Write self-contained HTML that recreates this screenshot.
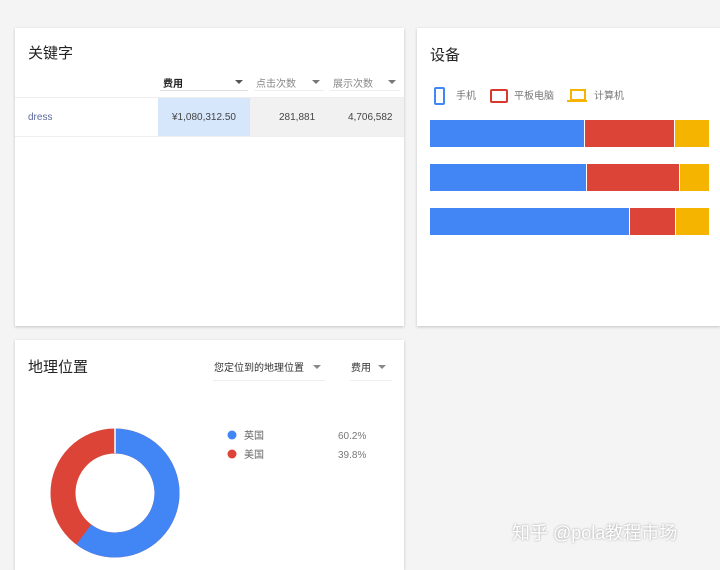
<!DOCTYPE html>
<html><head><meta charset="utf-8"><style>
body{margin:0;width:720px;height:565px;background:#f4f4f4;position:relative;overflow:hidden;font-family:"Liberation Sans","Noto Sans CJK SC",sans-serif;color:#333}
.card{position:absolute;background:#fff;box-shadow:0 1px 3px rgba(0,0,0,.2)}
.a{position:absolute;white-space:nowrap;line-height:1}
.t{font-size:15px;color:#222}
.s{font-size:10px}
.ar{position:absolute;width:0;height:0;border-left:4px solid transparent;border-right:4px solid transparent;border-top:4px solid #555}
</style></head><body>
<div class="card" style="left:15px;top:28px;width:389px;height:298px"></div>
<div class="card" style="left:417px;top:28px;width:303px;height:298px"></div>
<div class="card" style="left:15px;top:340px;width:389px;height:230px"></div>

<div class="a t" style="left:28px;top:46px">关键字</div>
<div class="a s" style="left:163px;top:80px;font-weight:bold;color:#222">费用</div><div class="ar" style="left:235px;top:80px"></div>
<div class="a" style="left:160px;top:90px;width:88px;height:1px;background:#ddd"></div>
<div class="a s" style="left:256px;top:80px;color:#888">点击次数</div><div class="ar" style="left:312px;top:80px;border-top-color:#777"></div>
<div class="a" style="left:254px;top:90px;width:70px;height:1px;background:#eee"></div>
<div class="a s" style="left:333px;top:80px;color:#888">展示次数</div><div class="ar" style="left:388px;top:80px;border-top-color:#777"></div>
<div class="a" style="left:330px;top:90px;width:70px;height:1px;background:#eee"></div>
<div class="a" style="left:15px;top:97px;width:389px;height:1px;background:#eee"></div>
<div class="a" style="left:158px;top:98px;width:92px;height:38px;background:#d6e6fb"></div>
<div class="a" style="left:250px;top:98px;width:154px;height:38px;background:#f1f1f1"></div>
<div class="a" style="left:15px;top:136px;width:389px;height:1px;background:#eee"></div>
<div class="a s" style="left:28px;top:113px;color:#5c6a9e">dress</div>
<div class="a s" style="left:172px;top:113px;color:#444">¥1,080,312.50</div>
<div class="a s" style="left:279px;top:113px;color:#444">281,881</div>
<div class="a s" style="left:348px;top:113px;color:#444">4,706,582</div>

<div class="a t" style="left:430px;top:48px">设备</div>
<div class="a" style="left:434px;top:87px;width:7px;height:14px;border:2px solid #4285f4;border-radius:2px"></div>
<div class="a s" style="left:456px;top:92px;color:#777">手机</div>
<div class="a" style="left:490px;top:89px;width:14px;height:10px;border:2px solid #d63a2f;border-radius:2px"></div>
<div class="a s" style="left:514px;top:92px;color:#777">平板电脑</div>
<div class="a" style="left:570px;top:89px;width:12px;height:8px;border:2px solid #f4b400"></div>
<div class="a" style="left:567px;top:100px;width:20px;height:2px;background:#f4b400"></div>
<div class="a s" style="left:594px;top:92px;color:#777">计算机</div>
<div class="a" style="left:430px;top:120px;width:154px;height:27px;background:#4285f4"></div>
<div class="a" style="left:585px;top:120px;width:89px;height:27px;background:#db4437"></div>
<div class="a" style="left:675px;top:120px;width:34px;height:27px;background:#f4b400"></div>
<div class="a" style="left:430px;top:164px;width:156px;height:27px;background:#4285f4"></div>
<div class="a" style="left:587px;top:164px;width:92px;height:27px;background:#db4437"></div>
<div class="a" style="left:680px;top:164px;width:29px;height:27px;background:#f4b400"></div>
<div class="a" style="left:430px;top:208px;width:199px;height:27px;background:#4285f4"></div>
<div class="a" style="left:630px;top:208px;width:45px;height:27px;background:#db4437"></div>
<div class="a" style="left:676px;top:208px;width:33px;height:27px;background:#f4b400"></div>

<div class="a t" style="left:28px;top:360px">地理位置</div>
<div class="a s" style="left:214px;top:364px;color:#333">您定位到的地理位置</div><div class="ar" style="left:313px;top:365px;border-top-color:#888"></div>
<div class="a" style="left:213px;top:380px;width:112px;height:1px;background:#eee"></div>
<div class="a s" style="left:351px;top:364px;color:#333">费用</div><div class="ar" style="left:378px;top:365px;border-top-color:#888"></div>
<div class="a" style="left:350px;top:380px;width:42px;height:1px;background:#eee"></div>
<svg class="a" style="left:0;top:0" width="720" height="565">
<circle cx="115" cy="493" r="52" fill="none" stroke="#db4437" stroke-width="25"/>
<circle cx="115" cy="493" r="52" fill="none" stroke="#4285f4" stroke-width="25" stroke-dasharray="196.7 400" transform="rotate(-90 115 493)"/>
<line x1="115" y1="428" x2="115" y2="453" stroke="#fff" stroke-width="1.5"/>
<circle cx="232" cy="435" r="4.5" fill="#4285f4"/><circle cx="232" cy="454" r="4.5" fill="#db4437"/>
</svg>
<div class="a s" style="left:244px;top:432px;color:#666">英国</div>
<div class="a s" style="left:338px;top:432px;color:#777">60.2%</div>
<div class="a s" style="left:244px;top:451px;color:#666">美国</div>
<div class="a s" style="left:338px;top:451px;color:#777">39.8%</div>
<div class="a" style="left:512px;top:524px;font-size:18px;color:#fff;text-shadow:0 0 2px #999">知乎 @pola教程市场</div>
</body></html>
